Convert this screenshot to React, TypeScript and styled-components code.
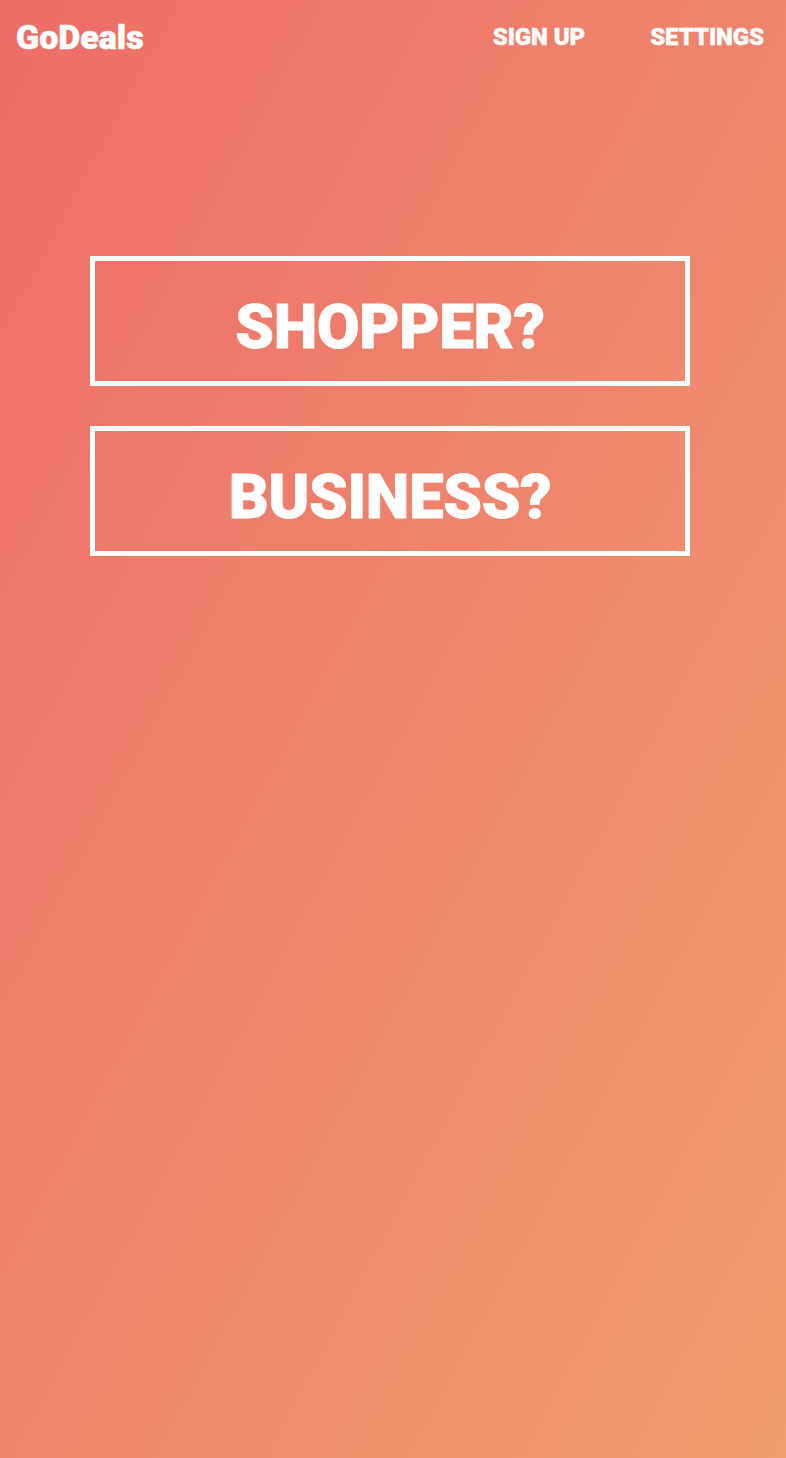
import React from "react";
import styled, { createGlobalStyle } from "styled-components";

const GlobalStyle = createGlobalStyle`
  html, body { margin: 0; padding: 0; }
  body {
    font-family: Roboto, "Liberation Sans", sans-serif;
    -webkit-font-smoothing: antialiased;
  }
  * { box-sizing: border-box; }
`;

const Page = styled.div`
  width: 786px;
  min-height: 1458px;
  background: linear-gradient(to bottom right, #ee6d68 0%, #f19d6f 100%);
  color: #ffffff;
  display: flex;
  flex-direction: column;
`;

const Header = styled.header`
  height: 74px;
  display: flex;
  align-items: center;
  justify-content: space-between;
  padding: 0 22px 0 16px;
`;

const Logo = styled.div`
  font-size: 34px;
  font-weight: 900;
  letter-spacing: 0;
  line-height: 1;
  -webkit-text-stroke: 0.5px #ffffff;
`;

const Nav = styled.nav`
  display: flex;
  align-items: center;
  gap: 65px;
`;

const NavLink = styled.a`
  font-size: 24px;
  font-weight: 900;
  color: #ffffff;
  text-decoration: none;
  line-height: 1;
  letter-spacing: -0.1px;
  -webkit-text-stroke: 0.4px #ffffff;
`;

const Main = styled.main`
  display: flex;
  flex-direction: column;
  align-items: center;
  gap: 40px;
  padding: 182px 6px 0 0;
`;

const ChoiceButton = styled.button`
  width: 600px;
  height: 130px;
  border: 5px solid #ffffff;
  background: transparent;
  color: #ffffff;
  font-family: Roboto, "Liberation Sans", sans-serif;
  font-size: 62px;
  font-weight: 900;
  letter-spacing: -0.4px;
  line-height: 1;
  -webkit-text-stroke: 0.8px #ffffff;
  display: flex;
  align-items: center;
  justify-content: center;
  padding: 12px 0 0 0;
  cursor: pointer;
`;

export default function App() {
  return (
    <>
      <GlobalStyle />
      <Page>
        <Header>
          <Logo>GoDeals</Logo>
          <Nav>
            <NavLink href="#">SIGN UP</NavLink>
            <NavLink href="#">SETTINGS</NavLink>
          </Nav>
        </Header>
        <Main>
          <ChoiceButton>SHOPPER?</ChoiceButton>
          <ChoiceButton>BUSINESS?</ChoiceButton>
        </Main>
      </Page>
    </>
  );
}
